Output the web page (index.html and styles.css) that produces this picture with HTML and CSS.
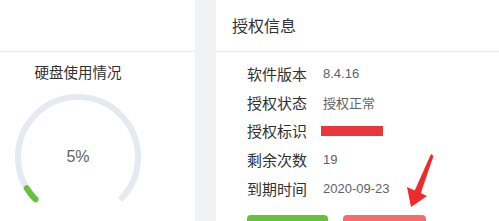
FILE: index.html
```html
<!DOCTYPE html>
<html lang="zh-CN">
<head>
<meta charset="utf-8">
<title>授权信息</title>
<link rel="stylesheet" href="styles.css">
</head>
<body>
<div class="page">
  <section class="card card-left">
    <div class="card-header"></div>
    <div class="card-body left-body">
      <div class="disk">
        <div class="disk-title">硬盘使用情况</div>
        <div class="gauge">
          <svg class="gauge-svg" viewBox="0 0 100 100" width="126" height="126">
            <path class="gauge-track" d="M 50 50 m 0 47.62 a 47.62 47.62 0 1 1 0 -95.24 a 47.62 47.62 0 1 1 0 95.24" fill="none" stroke-width="4.8" style="stroke-dasharray: 224.4px, 299.2px; stroke-dashoffset: -37.4px;"></path>
            <path class="gauge-bar" d="M 50 50 m 0 47.62 a 47.62 47.62 0 1 1 0 -95.24 a 47.62 47.62 0 1 1 0 95.24" fill="none" stroke-width="4.8" stroke-linecap="round" style="stroke-dasharray: 11.2px, 299.2px; stroke-dashoffset: -37.4px;"></path>
          </svg>
          <div class="gauge-text">5%</div>
        </div>
      </div>
    </div>
  </section>
  <section class="card card-right">
    <div class="card-header"><span class="card-title">授权信息</span></div>
    <div class="card-body right-body">
      <div class="row"><span class="label">软件版本</span><span class="value">8.4.16</span></div>
      <div class="row"><span class="label">授权状态</span><span class="value">授权正常</span></div>
      <div class="row"><span class="label">授权标识</span><span class="value"><span class="redact"></span></span></div>
      <div class="row"><span class="label">剩余次数</span><span class="value">19</span></div>
      <div class="row"><span class="label">到期时间</span><span class="value">2020-09-23</span></div>
      <div class="actions">
        <button class="btn btn-success" type="button"></button>
        <button class="btn btn-danger" type="button"></button>
      </div>
    </div>
  </section>
</div>
<svg class="arrow" width="499" height="221" viewBox="0 0 499 221">
  <polygon points="431,154 433.5,156 420.5,194 414.5,191" fill="#ee2a2a"></polygon>
  <polygon points="407,187 427,196 411,207" fill="#ee2a2a"></polygon>
</svg>
</body>
</html>
```
FILE: styles.css
```css
html, body {
  margin: 0;
  padding: 0;
}
body {
  width: 499px;
  height: 221px;
  overflow: hidden;
  background: #f0f2f5;
  font-family: "Liberation Sans", "Noto Sans CJK SC", sans-serif;
  position: relative;
}
.page {
  display: flex;
  gap: 21px;
  height: 221px;
  overflow: hidden;
}
.card {
  background: #fff;
  display: flex;
  flex-direction: column;
  overflow: hidden;
}
.card-left {
  width: 195px;
}
.card-right {
  flex: 1;
}
.card-header {
  flex-shrink: 0;
  height: 52px;
  box-sizing: border-box;
  border-bottom: 1px solid #e6e8ec;
  padding-left: 16px;
  display: flex;
  align-items: center;
}
.card-body {
  flex-shrink: 0;
}
.card-title {
  font-size: 16px;
  color: #303133;
  margin-top: -2px;
}
.left-body {
  width: 156px;
  display: flex;
  flex-direction: column;
  align-items: center;
}
.disk {
  display: flex;
  flex-direction: column;
  align-items: center;
  padding-top: 11px;
}
.disk-title {
  font-size: 14.5px;
  color: #303133;
  line-height: 20px;
}
.gauge {
  margin-top: 11px;
  width: 126px;
  height: 126px;
  position: relative;
}
.gauge-svg {
  display: block;
}
.gauge-track {
  stroke: #e5e9f2;
}
.gauge-bar {
  stroke: #67c23a;
}
.gauge-text {
  position: absolute;
  inset: 0;
  display: flex;
  align-items: center;
  justify-content: center;
  font-size: 16px;
  color: #606266;
}
.right-body {
  padding: 7px 0 0 31px;
}
.row {
  height: 28.75px;
  display: flex;
  align-items: center;
}
.label {
  width: 76px;
  font-size: 15px;
  color: #303133;
}
.value {
  font-size: 13px;
  color: #606266;
}
.redact {
  display: block;
  width: 62px;
  height: 10px;
  margin-left: -2px;
  background: #e8383b;
}
.actions {
  display: flex;
  gap: 15px;
  margin-top: 12px;
}
.btn {
  flex-shrink: 0;
  height: 36px;
  border: none;
  border-radius: 4px;
  padding: 0;
}
.btn-success {
  width: 81px;
  background: #67c23a;
}
.btn-danger {
  width: 83px;
  background: #f56c6c;
}
.arrow {
  position: absolute;
  left: 0;
  top: 0;
  pointer-events: none;
}
```
